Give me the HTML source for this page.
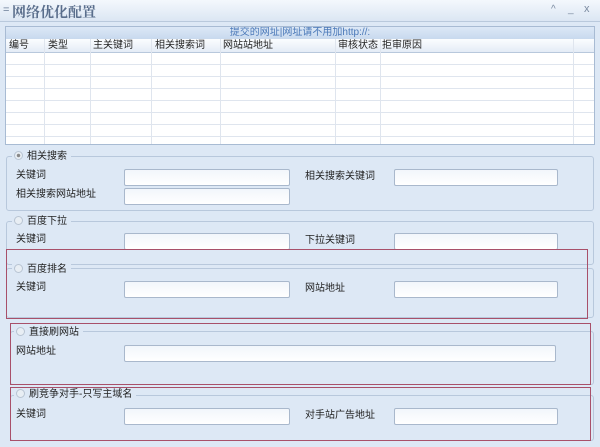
<!DOCTYPE html>
<html><head><meta charset="utf-8"><style>
*{margin:0;padding:0;box-sizing:border-box}
body{width:600px;height:447px;overflow:hidden;background:#dde8f5;font-family:"Liberation Sans","Noto Sans CJK SC",sans-serif;font-size:10px;color:#222;position:relative}
.a{position:absolute}
.inp{position:absolute;height:17px;border:1px solid #a9b8cc;background:linear-gradient(#f2f6fb,#fff);border-radius:2px}
.fs{position:absolute;border:1px solid #b8c8dc;border-radius:3px}
.red{position:absolute;border:1px solid #a8506a}
.lg{position:absolute;background:#dde8f5;padding:0 4px 0 2px;font-size:10px;line-height:12px}
.rd{display:inline-block;width:9px;height:9px;border-radius:50%;border:1px solid #b8c4d2;background:#e8eef4;vertical-align:-1px;margin-right:4px}
.lbl{position:absolute;font-size:10px;line-height:12px}
</style></head><body>
<div class="a" style="left:0;top:0;width:600px;height:22px;background:linear-gradient(#f4f8fd,#dbe6f3);border-bottom:1px solid #b9c9dc"></div>
<div class="a" style="left:3px;top:4px;color:#6a7d96;font-size:11px">=</div>
<div class="a" style="left:12px;top:2px;color:#5a6e8c;font-size:14px;font-weight:bold;font-family:'Liberation Serif','Noto Serif CJK SC',serif">网络优化配置</div>
<div class="a" style="left:551px;top:4px;color:#7a8aa0;font-size:10px">^</div>
<div class="a" style="left:568px;top:4px;color:#7a8aa0;font-size:10px">_</div>
<div class="a" style="left:584px;top:3px;color:#7a8aa0;font-size:11px">x</div>

<div class="a" style="left:5px;top:26px;width:590px;height:119px;border:1px solid #a8bbd3;background:#fff;overflow:hidden">
<div class="a" style="left:0;top:0;width:588px;height:12px;background:linear-gradient(#dce8f6,#c8d9ee);text-align:center;color:#4a78b8;font-size:10px;line-height:12px">提交的网址|网址请不用加http://:</div>
<div class="a" style="left:0;top:12px;width:588px;height:14px;background:linear-gradient(#fbfdff,#e4ecf6);border-bottom:1px solid #b8c8dc;font-size:10px;line-height:13px">
<span class="a" style="left:3px">编号</span><span class="a" style="left:42px">类型</span><span class="a" style="left:87px">主关键词</span><span class="a" style="left:149px">相关搜索词</span><span class="a" style="left:217px">网站站地址</span><span class="a" style="left:332px">审核状态</span><span class="a" style="left:376px">拒审原因</span>
</div>
<svg class="a" style="left:0;top:12px" width="588" height="110">
<g stroke="#dfe5ee" stroke-width="1">
<line x1="38.5" y1="0" x2="38.5" y2="110"/><line x1="84.5" y1="0" x2="84.5" y2="110"/><line x1="145.5" y1="0" x2="145.5" y2="110"/><line x1="214.5" y1="0" x2="214.5" y2="110"/><line x1="329.5" y1="0" x2="329.5" y2="110"/><line x1="374.5" y1="0" x2="374.5" y2="110"/><line x1="567.5" y1="0" x2="567.5" y2="110"/>
<line x1="0" y1="25.5" x2="588" y2="25.5"/><line x1="0" y1="37.5" x2="588" y2="37.5"/><line x1="0" y1="49.5" x2="588" y2="49.5"/><line x1="0" y1="61.5" x2="588" y2="61.5"/><line x1="0" y1="73.5" x2="588" y2="73.5"/><line x1="0" y1="85.5" x2="588" y2="85.5"/><line x1="0" y1="97.5" x2="588" y2="97.5"/>
</g></svg>
</div>

<!-- group 1 -->
<div class="fs" style="left:6px;top:156px;width:588px;height:55px"></div>
<div class="lg" style="left:12px;top:151px"><span class="rd" style="background:radial-gradient(#888 30%,#e8eef4 40%)"></span>相关搜索</div>
<div class="lbl" style="left:16px;top:170px">关键词</div>
<div class="inp" style="left:124px;top:169px;width:166px"></div>
<div class="lbl" style="left:305px;top:171px">相关搜索关键词</div>
<div class="inp" style="left:394px;top:169px;width:164px"></div>
<div class="lbl" style="left:16px;top:189px">相关搜索网站地址</div>
<div class="inp" style="left:124px;top:188px;width:166px"></div>

<!-- group 2 -->
<div class="fs" style="left:6px;top:221px;width:588px;height:44px"></div>
<div class="lg" style="left:12px;top:216px"><span class="rd"></span>百度下拉</div>
<div class="lbl" style="left:16px;top:234px">关键词</div>
<div class="inp" style="left:124px;top:233px;width:166px"></div>
<div class="lbl" style="left:305px;top:235px">下拉关键词</div>
<div class="inp" style="left:394px;top:233px;width:164px"></div>

<!-- group 3 -->
<div class="fs" style="left:6px;top:268px;width:588px;height:50px"></div>
<div class="red" style="left:6px;top:249px;width:582px;height:70px"></div>
<div class="lg" style="left:12px;top:264px"><span class="rd"></span>百度排名</div>
<div class="lbl" style="left:16px;top:282px">关键词</div>
<div class="inp" style="left:124px;top:281px;width:166px"></div>
<div class="lbl" style="left:305px;top:283px">网站地址</div>
<div class="inp" style="left:394px;top:281px;width:164px"></div>

<!-- group 4 -->
<div class="fs" style="left:10px;top:331px;width:584px;height:54px"></div>
<div class="red" style="left:10px;top:323px;width:581px;height:62px"></div>
<div class="lg" style="left:14px;top:327px"><span class="rd"></span>直接刷网站</div>
<div class="lbl" style="left:16px;top:346px">网站地址</div>
<div class="inp" style="left:124px;top:345px;width:432px"></div>

<!-- group 5 -->
<div class="fs" style="left:10px;top:395px;width:584px;height:46px"></div>
<div class="red" style="left:10px;top:387px;width:581px;height:54px"></div>
<div class="lg" style="left:14px;top:389px"><span class="rd"></span>刷竞争对手-只写主域名</div>
<div class="lbl" style="left:16px;top:409px">关键词</div>
<div class="inp" style="left:124px;top:408px;width:166px"></div>
<div class="lbl" style="left:305px;top:410px">对手站广告地址</div>
<div class="inp" style="left:394px;top:408px;width:164px"></div>
</body></html>
